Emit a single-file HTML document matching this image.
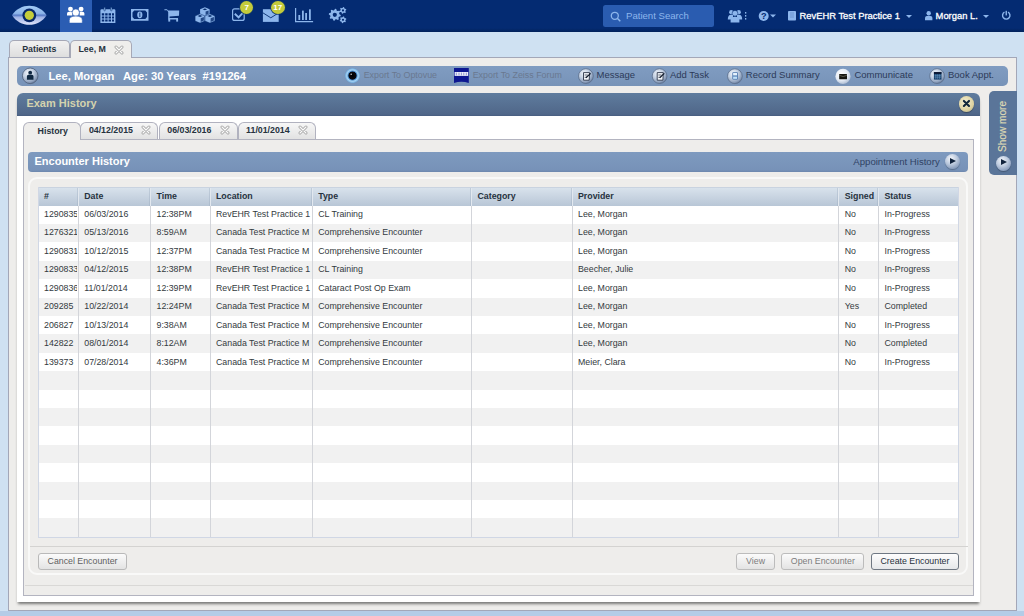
<!DOCTYPE html>
<html><head><meta charset="utf-8">
<style>
*{box-sizing:border-box;margin:0;padding:0}
html,body{width:1024px;height:616px;overflow:hidden;background:#cfe1f2;font-family:"Liberation Sans",sans-serif;position:relative}
div{position:absolute}
#nav{left:0;top:0;width:1024px;height:31.5px;background:linear-gradient(#042b72 0,#042b72 88%,#02225a 100%)}
#navact{left:59.5px;top:0;width:32.5px;height:31.5px;background:#2b5db3}
.badge{width:13px;height:13px;border-radius:50%;background:#c4cb3b;color:#fff;font-size:8px;font-weight:bold;text-align:center;line-height:13px;box-shadow:0 0 0 0.8px #123a6a}
#search{left:602.5px;top:5px;width:111.5px;height:22px;background:#2a5cb0;border-radius:2.5px}
#search span{position:absolute;left:23.5px;top:5.3px;font-size:9.6px;color:#8db6ec;white-space:nowrap}
.navt{color:#fff;font-size:9.4px;-webkit-text-stroke:0.3px #fff;white-space:nowrap;top:10.2px}
.caret{width:0;height:0;border-left:3.5px solid transparent;border-right:3.5px solid transparent;border-top:3.6px solid #8db6ec}
.ttab{top:39.8px;height:17.4px;border:1px solid #a6a8b6;border-bottom:none;border-radius:5px 5px 0 0;font-size:8.8px;font-weight:bold;color:#26323e;white-space:nowrap;background:linear-gradient(#f1f1f1,#dedede)}
.ttab.act{background:#efeeec;height:18.2px;z-index:3}
.xic{position:absolute}
#content{left:8px;top:57px;width:1009px;height:553.6px;background:#eeedeb;border:1px solid #a3a7b8}
#footer{left:0;top:610.6px;width:1024px;height:6px;background:#b4cce7}
#pbar{left:17px;top:66.4px;width:991px;height:19.6px;border-radius:5px;background:linear-gradient(#809cc1,#7793b8)}
.pbt{color:#fff;font-size:11.2px;font-weight:bold;white-space:nowrap;top:3.6px}
.atx{font-size:9.5px;color:#2c3a58;white-space:nowrap;top:3px}
.atx.dis{color:#6a7890;font-size:8.9px;top:3.2px}
.aic{width:14px;height:14px;border-radius:50%;top:2.8px;background:radial-gradient(circle at 50% 35%,#f4f6fa,#b8c3d4 60%,#7c8ba4);box-shadow:0 1px 1px rgba(0,0,0,.25)}
#exam{left:17px;top:93px;width:963px;height:508.5px;background:#fff;border-radius:6px 6px 0 0;box-shadow:0 3.5px 3px -1.5px rgba(0,0,0,.5)}
#examh{left:0;top:0;width:963px;height:22.5px;border-radius:6px 6px 0 0;background:linear-gradient(#5f7c9e,#506789 92%,#485d80)}
#examh span{position:absolute;left:9.4px;top:4.2px;font-size:11px;font-weight:bold;color:#d4d3ae;white-space:nowrap}
#closeb{left:941.9px;top:3.1px;width:15.6px;height:15.6px;border-radius:50%;background:radial-gradient(circle at 42% 38%,#f4f0d6,#ddd2a0 60%,#b8b08a 88%,#8c8a80);box-shadow:0 1px 1px rgba(0,0,0,.3)}
#showm{left:989px;top:91px;width:28px;height:84px;background:#5a7599;border-radius:5px 0 0 5px}
#showm span{position:absolute;left:7.6px;top:61px;transform-origin:0 0;transform:rotate(-90deg);font-size:10.1px;-webkit-text-stroke:0.2px #ddd9b4;color:#ddd9b4;white-space:nowrap}
.itab{top:122px;height:16.8px;border:1px solid #b1b2bf;border-bottom:none;border-radius:6px 6px 0 0;font-size:8.8px;font-weight:bold;color:#26323e;white-space:nowrap;background:linear-gradient(#f7f7f7,#e2e2e2)}
.itab.on{background:#efeeec;height:17.5px;z-index:3}
#tpanel{left:23px;top:138.5px;width:951px;height:457px;background:#eeedeb;border:1px solid #b3b4c0}
#ebar{left:28.3px;top:152px;width:940px;height:19.5px;border-radius:4px;background:linear-gradient(#7e9abf,#7792b8 90%,#6d87ad)}
#ebar span{position:absolute;left:6.2px;top:3px;font-size:11px;font-weight:bold;color:#fff;white-space:nowrap}
#ebar b{position:absolute;right:28.6px;top:3.9px;font-size:9.6px;font-weight:normal;color:#304264;white-space:nowrap}
.playb{width:15px;height:15px;border-radius:50%;background:radial-gradient(circle at 40% 30%,#f2f5fa,#c0cde0 40%,#8a9ebd 75%,#5a6d8e);box-shadow:0 1px 1px rgba(0,0,0,.25)}
.playb:after{content:"";position:absolute;left:5.4px;top:3.9px;border-left:6px solid #10223c;border-top:3.6px solid transparent;border-bottom:3.6px solid transparent}
#grid{left:28.3px;top:177.3px;width:940.2px;height:397.9px;border-radius:9px;border:2px solid #f9f9f8;background:#eeedeb}
#tbl{left:38px;top:186.5px;width:920.5px;height:351.2px;border:1px solid #d0d7e5;border-top:none;background:#fff;overflow:hidden}
#thead{left:0;top:0;width:920.5px;height:19.2px;background:linear-gradient(#d8e2ec,#b8c6d6);border-top:1px solid #c9d3e0}
.hc{top:0;height:19px;line-height:16.4px;padding-left:6px;font-size:8.8px;font-weight:bold;color:#26323e;white-space:nowrap}
.hvl{top:0;width:1px;height:19.2px;background:#e2e8ef;box-shadow:-1px 0 0 rgba(150,165,185,.35)}
#tbody{left:0;top:19.2px;width:920.5px;height:332px}
.r{left:0;width:920.5px;height:18.4px}
.vl{top:0;width:1px;height:332px;background:#d3d5da}
.c{height:18.4px;line-height:16.6px;padding-left:6px;font-size:8.8px;color:#333a40;white-space:nowrap;overflow:hidden}
#sep{left:29.5px;top:546.3px;width:938px;height:1px;background:#d4d3d1}
.btn{top:553px;height:17px;border:1px solid #b9b9b9;border-radius:3px;background:linear-gradient(#fbfbfb,#e3e3e3);font-size:8.8px;color:#606060;text-align:center;line-height:15px;white-space:nowrap}
.btn.pri{border-color:#6f7883;color:#27313c;background:linear-gradient(#fdfdfd,#e6e8ea)}
.btn.dis{color:#7c7c7c;border-color:#bcbcbc}
#line585{left:24.5px;top:585.2px;width:948.5px;height:1px;background:#d9d8d6}
</style></head>
<body>
<div id="nav"></div>
<div id="navact"></div>
<svg style="position:absolute;left:0;top:0" width="1024" height="32" viewBox="0 0 1024 32">
 <defs>
  <linearGradient id="eyeg" x1="0" y1="0" x2="0" y2="1"><stop offset="0" stop-color="#a4cdf6"/><stop offset="0.4" stop-color="#8cb4ea"/><stop offset="0.5" stop-color="#5a7cc8"/><stop offset="0.6" stop-color="#9fb2e6"/><stop offset="1" stop-color="#dfe4fa"/></linearGradient>
 </defs>
 <path d="M12,15.3 C20,2.6 38.6,2.6 46.6,15.3 C38.6,28 20,28 12,15.3Z" fill="url(#eyeg)"/>
 <circle cx="29.3" cy="15.3" r="6.9" fill="#08286a"/>
 <circle cx="29.3" cy="15.3" r="4.65" fill="#c4cc3c"/>
 <g fill="#fff">
  <circle cx="70.45" cy="9.1" r="2.45"/><circle cx="81.1" cy="9.1" r="2.45"/>
  <path d="M67,15.6 L67,13.6 Q67,11.7 69,11.7 L72.3,11.7 L72.3,15.6Z"/>
  <path d="M79.6,11.7 L82.6,11.7 Q84.4,11.7 84.4,13.6 L84.4,15.6 L79.6,15.6Z"/>
  <circle cx="75.8" cy="12.6" r="3.6" stroke="#2b5db3" stroke-width="0.6"/>
  <path d="M69.3,23.1 L69.3,20.3 Q69.3,16.1 75.8,16.1 Q82.3,16.1 82.3,20.3 L82.3,23.1Z" stroke="#2b5db3" stroke-width="0.6"/>
 </g>
 <g fill="#8db6ec">
  <!-- calendar -->
  <path fill-rule="evenodd" d="M100.4,10.4 Q100.4,9.2 101.6,9.2 L114.2,9.2 Q115.4,9.2 115.4,10.4 L115.4,22.9 L100.4,22.9Z M101.8,13.2 L101.8,15.4 L104.2,15.4 L104.2,13.2Z M105.2,13.2 L105.2,15.4 L107.6,15.4 L107.6,13.2Z M108.6,13.2 L108.6,15.4 L111,15.4 L111,13.2Z M112,13.2 L112,15.4 L114,15.4 L114,13.2Z M101.8,16.4 L101.8,18.6 L104.2,18.6 L104.2,16.4Z M105.2,16.4 L105.2,18.6 L107.6,18.6 L107.6,16.4Z M108.6,16.4 L108.6,18.6 L111,18.6 L111,16.4Z M112,16.4 L112,18.6 L114,18.6 L114,16.4Z M101.8,19.6 L101.8,21.6 L104.2,21.6 L104.2,19.6Z M105.2,19.6 L105.2,21.6 L107.6,21.6 L107.6,19.6Z M108.6,19.6 L108.6,21.6 L111,21.6 L111,19.6Z M112,19.6 L112,21.6 L114,21.6 L114,19.6Z"/>
  <rect x="103.9" y="7.3" width="1.4" height="3.6" rx="0.7" stroke="#062c6d" stroke-width="0.5"/>
  <rect x="110.6" y="7.3" width="1.4" height="3.6" rx="0.7" stroke="#062c6d" stroke-width="0.5"/>
  <!-- money -->
  <path fill-rule="evenodd" d="M131,8.9 L148.5,8.9 L148.5,20.7 L131,20.7Z M134.2,10.6 L145.3,10.6 L147,12.6 L147,17 L145.3,19 L134.2,19 L132.5,17 L132.5,12.6Z"/>
  <ellipse cx="139.8" cy="14.8" rx="2.6" ry="3.4"/>
  <path d="M139.4,12.8 L140.3,12.6 L140.3,17 L139.4,17Z" fill="#062c6d"/>
  <!-- cart -->
  <path d="M164.4,9.2 L166.8,9.2 L168.2,10.6 L179.2,10.6 L179,15.8 L169.6,16.6 L169.6,18 L178,18 L178,19.4 L168.2,19.4 L168.2,12 L167,10.3 L164.4,10.3Z"/>
  <rect x="168.3" y="18.6" width="1.9" height="3" /><rect x="176.2" y="18.6" width="1.9" height="3"/>
  <!-- boxes -->
  <path d="M204.9,7.3 L209.6,9.3 L209.6,14.4 L204.9,16.4 L200.1,14.4 L200.1,9.3Z"/>
  <path d="M200,13.8 L204.9,15.9 L204.9,21.1 L200,23.1 L195.1,21.1 L195.1,15.9Z" stroke="#062c6d" stroke-width="0.5"/>
  <path d="M209.9,13.8 L214.9,15.9 L214.9,21.1 L209.9,23.1 L204.9,21.1 L204.9,15.9Z" stroke="#062c6d" stroke-width="0.5"/>
  <path d="M202.6,9.3 L204.9,8.4 L207.2,9.3 L204.9,10.2Z M197.6,16 L200,15.1 L202.4,16 L200,16.9Z M207.5,16 L209.9,15.1 L212.3,16 L209.9,16.9Z" fill="#062c6d"/>
  <path d="M205.6,11.6 L208.6,10.4 L208.6,13.8 L205.6,15Z M200.7,18.3 L203.9,17 L203.9,20.6 L200.7,21.9Z M210.6,18.3 L213.9,17 L213.9,20.6 L210.6,21.9Z" fill="#062c6d" opacity="0.8"/>
  <!-- checkbox -->
  <rect x="232.6" y="8.8" width="11.6" height="11.6" rx="2" fill="none" stroke="#8db6ec" stroke-width="1.2"/>
  <path d="M234.8,13.8 L238.6,17.4 L244.4,11.2" fill="none" stroke="#8db6ec" stroke-width="1.9"/>
  <!-- mail -->
  <path d="M262.9,9.2 L278.7,9.2 L278.7,21.9 L262.9,21.9Z"/>
  <path d="M262.9,12.8 L270.8,17.8 L278.7,12.8" fill="none" stroke="#062c6d" stroke-width="0.9"/>
  <!-- chart -->
  <path d="M295,8.1 L296.2,8.1 L296.2,21 L313.1,21 L313.1,22.2 L295,22.2Z"/>
  <rect x="298.4" y="15" width="1.8" height="5"/><rect x="302" y="10.6" width="1.8" height="9.4"/><rect x="305.2" y="13" width="1.8" height="7"/><rect x="309" y="9.3" width="1.8" height="10.7"/>
  <!-- gears -->
  <path fill-rule="evenodd" d="M335.09,8.81 L336.26,8.98 L336.77,10.64 L337.54,11.11 L339.25,10.77 L339.95,11.72 L339.13,13.25 L339.35,14.13 L340.79,15.09 L340.62,16.26 L338.96,16.77 L338.49,17.54 L338.83,19.25 L337.88,19.95 L336.35,19.13 L335.47,19.35 L334.51,20.79 L333.34,20.62 L332.83,18.96 L332.06,18.49 L330.35,18.83 L329.65,17.88 L330.47,16.35 L330.25,15.47 L328.81,14.51 L328.98,13.34 L330.64,12.83 L331.11,12.06 L330.77,10.35 L331.72,9.65 L333.25,10.47 L334.13,10.25Z M336.90,14.80 A2.1,2.1 0 1 0 332.70,14.80 A2.1,2.1 0 1 0 336.90,14.80Z M343.22,7.01 L344.09,7.18 L344.39,8.32 L344.88,8.75 L346.05,8.90 L346.33,9.74 L345.49,10.56 L345.37,11.20 L345.83,12.29 L345.24,12.96 L344.11,12.64 L343.49,12.85 L342.78,13.79 L341.91,13.62 L341.61,12.48 L341.12,12.05 L339.95,11.90 L339.67,11.06 L340.51,10.24 L340.63,9.60 L340.17,8.51 L340.76,7.84 L341.89,8.16 L342.51,7.95Z M344.10,10.40 A1.1,1.1 0 1 0 341.90,10.40 A1.1,1.1 0 1 0 344.10,10.40Z M343.22,16.41 L344.09,16.58 L344.39,17.72 L344.88,18.15 L346.05,18.30 L346.33,19.14 L345.49,19.96 L345.37,20.60 L345.83,21.69 L345.24,22.36 L344.11,22.04 L343.49,22.25 L342.78,23.19 L341.91,23.02 L341.61,21.88 L341.12,21.45 L339.95,21.30 L339.67,20.46 L340.51,19.64 L340.63,19.00 L340.17,17.91 L340.76,17.24 L341.89,17.56 L342.51,17.35Z M344.10,19.80 A1.1,1.1 0 1 0 341.90,19.80 A1.1,1.1 0 1 0 344.10,19.80Z"/>
 </g>
</svg>
<div class="badge" style="left:240.3px;top:1.2px">7</div>
<div class="badge" style="left:270.8px;top:1.2px;width:14px">17</div>
<div id="search"><svg style="position:absolute;left:7px;top:5.5px" width="12" height="12" viewBox="0 0 12 12"><circle cx="4.8" cy="4.8" r="3.5" fill="none" stroke="#8db6ec" stroke-width="1.3"/><path d="M7.3,7.3 L10.3,10.3" stroke="#8db6ec" stroke-width="1.5"/></svg><span>Patient Search</span></div>
<svg style="position:absolute;left:720px;top:0" width="300" height="32" viewBox="720 0 300 32">
 <g fill="#8db6ec">
  <circle cx="731.2" cy="12.2" r="2.1"/><circle cx="738.8" cy="12.2" r="2.1"/><circle cx="735" cy="13.3" r="2.9" stroke="#042b72" stroke-width="0.6"/>
  <path d="M727.8,19.5 Q727.8,14.8 731,14.8 L733,14.8 L733,19.5Z M742.2,19.5 Q742.2,14.8 739,14.8 L737,14.8 L737,19.5Z"/>
  <path d="M730.6,22.6 L730.6,20 Q730.6,16.7 735,16.7 Q739.4,16.7 739.4,20 L739.4,22.6Z"/>
  <rect x="745" y="12" width="1.3" height="1.6"/><rect x="745" y="15" width="1.3" height="1.6"/><rect x="745" y="18" width="1.3" height="1.6"/>
  <circle cx="763.7" cy="16" r="5"/>
  <path d="M770,14.5 L776,14.5 L773,17.6Z"/>
  <rect x="788" y="11" width="8" height="9.6" rx="0.8"/>
 </g>
 <text x="763.7" y="19.4" font-size="9.2" font-weight="bold" text-anchor="middle" fill="#042b72" font-family="Liberation Sans">?</text>
 <path d="M790,13 L794,13 M790,15 L794,15 M790,17 L794,17" stroke="#5f88c4" stroke-width="0.7"/>
 <g fill="#8db6ec">
  <circle cx="928.7" cy="13.2" r="2.2"/>
  <path d="M925,20.2 L925,18.2 Q925,15.8 928.7,15.8 Q932.4,15.8 932.4,18.2 L932.4,20.2Z"/>
  <path d="M1004.5,12.2 A3.7,3.7 0 1 0 1008,12.2" fill="none" stroke="#8db6ec" stroke-width="1.4"/>
  <rect x="1005.55" y="10.8" width="1.4" height="4.6"/>
 </g>
</svg>
<div class="navt" style="left:799.5px">RevEHR Test Practice 1</div>
<div class="caret" style="left:905.6px;top:14.6px"></div>
<div class="navt" style="left:935.6px">Morgan L.</div>
<div class="caret" style="left:983.2px;top:14.6px"></div>

<!-- top tabs -->
<div class="ttab" style="left:8.6px;width:61px"><span style="position:absolute;left:12.6px;top:2.8px">Patients</span></div>
<div class="ttab act" style="left:69.5px;width:62px"><span style="position:absolute;left:8px;top:3.5px">Lee, M</span><svg style="position:absolute;left:43.50px;top:4.30px" width="10" height="10" viewBox="0 0 10 10"><path d="M2,2 L8,8 M8,2 L2,8" stroke="#a0a0a0" stroke-width="2.9" stroke-linecap="round"/><path d="M2,2 L8,8 M8,2 L2,8" stroke="#fcfcfc" stroke-width="1.3" stroke-linecap="round"/></svg></div>
<div id="content"></div><div id="footer"></div>
<div id="pbar">
 <div class="pbt" style="left:31.4px">Lee, Morgan</div>
 <div class="pbt" style="left:106px">Age: 30 Years</div>
 <div class="pbt" style="left:185.5px">#191264</div>
 <div class="atx dis" style="left:346.7px">Export To Optovue</div>
 <div class="atx dis" style="left:455.7px">Export To Zeiss Forum</div>
 <div class="atx" style="left:579.5px">Message</div>
 <div class="atx" style="left:653px">Add Task</div>
 <div class="atx" style="left:728.8px">Record Summary</div>
 <div class="atx" style="left:837.4px">Communicate</div>
 <div class="atx" style="left:931px">Book Appt.</div>
</div>
<svg style="position:absolute;left:0;top:60px" width="1024" height="32" viewBox="0 60 1024 32">
 <defs>
  <radialGradient id="gl" cx="0.38" cy="0.32" r="0.75"><stop offset="0" stop-color="#f2f6fc"/><stop offset="0.45" stop-color="#c3d0e2"/><stop offset="0.8" stop-color="#8a9dba"/><stop offset="1" stop-color="#56698a"/></radialGradient>
  <radialGradient id="glw" cx="0.4" cy="0.35" r="0.75"><stop offset="0" stop-color="#ffffff"/><stop offset="0.55" stop-color="#e4ebf5"/><stop offset="0.85" stop-color="#b6c4d8"/><stop offset="1" stop-color="#8797b2"/></radialGradient>
  <radialGradient id="opt" cx="0.5" cy="0.5" r="0.5"><stop offset="0" stop-color="#000"/><stop offset="0.48" stop-color="#0a0a10"/><stop offset="0.56" stop-color="#3f80c0"/><stop offset="0.72" stop-color="#a9d6f6"/><stop offset="0.9" stop-color="#7fb4e0"/><stop offset="1" stop-color="#6c95c4"/></radialGradient>
 </defs>
 <!-- avatar -->
 <circle cx="30.2" cy="75.8" r="7.8" fill="url(#gl)" stroke="#52647f" stroke-width="0.9"/>
 <circle cx="30.2" cy="72.7" r="1.9" fill="#0f2842"/>
 <path d="M26.9,79.8 L26.9,76.4 Q26.9,74.8 28.4,74.8 L32,74.8 Q33.5,74.8 33.5,76.4 L33.5,79.8Z" fill="#0f2842"/>
 <!-- optovue -->
 <circle cx="352.5" cy="75.6" r="7.7" fill="url(#opt)"/>
 <circle cx="351.2" cy="74.3" r="0.8" fill="#c8c8c8"/>
 <!-- zeiss -->
 <path d="M454,68.1 L468.8,68.1 L468.8,82.9 Q461.4,80.6 454,82.9Z" fill="#0d1791"/>
 <rect x="454.6" y="72" width="13.6" height="3.9" fill="#eef0fa"/>
 <path d="M456.3,72.6 L456.3,75.3 M459,72.6 L459,75.3 M461.4,72.6 L461.4,75.3 M463.8,72.6 L463.8,75.3 M466.3,72.6 L466.3,75.3" stroke="#4a55b0" stroke-width="0.6"/>
 <!-- message -->
 <circle cx="585.9" cy="76.1" r="7.4" fill="url(#gl)" stroke="#5c6e8c" stroke-width="0.8"/>
 <path d="M583.5,72.6 L589.6,72.6 L589.2,80.2 L583.5,80.2Z" fill="#f4f7fb" stroke="#2a3448" stroke-width="0.9"/>
 <path d="M584.6,75 L587.8,75 M584.6,77.3 L586.6,77.3" stroke="#2a3448" stroke-width="0.7"/>
 <path d="M586,77.8 L590.6,73.4" stroke="#111a2a" stroke-width="1.3"/>
 <!-- add task -->
 <circle cx="659.6" cy="76.1" r="7.4" fill="url(#gl)" stroke="#5c6e8c" stroke-width="0.8"/>
 <path d="M657.2,72.6 L663.3,72.6 L662.9,80.2 L657.2,80.2Z" fill="#f4f7fb" stroke="#2a3448" stroke-width="0.9"/>
 <path d="M658.3,75 L661.5,75 M658.3,77.3 L660.3,77.3" stroke="#2a3448" stroke-width="0.7"/>
 <path d="M659.7,77.8 L664.3,73.4" stroke="#111a2a" stroke-width="1.3"/>
 <!-- record -->
 <circle cx="734.9" cy="76.2" r="7.4" fill="url(#gl)" stroke="#5c6e8c" stroke-width="0.8"/>
 <rect x="732.4" y="72.3" width="5.4" height="7.2" rx="0.8" fill="#3a6aa8"/>
 <rect x="733.1" y="72.9" width="4" height="2.6" fill="#e6f2fc"/>
 <rect x="733.1" y="76.5" width="4" height="2.4" fill="#bfe0f8"/>
 <!-- communicate -->
 <circle cx="843" cy="76.4" r="7.6" fill="url(#glw)"/>
 <rect x="839.2" y="74" width="7.8" height="5.2" rx="0.5" fill="#15150f"/>
 <path d="M839.4,75.4 Q843.1,77.6 846.8,75.4" fill="none" stroke="#8a8a7a" stroke-width="0.6"/>
 <!-- book -->
 <circle cx="937.1" cy="76.1" r="7.4" fill="url(#gl)" stroke="#5c6e8c" stroke-width="0.8"/>
 <rect x="933.9" y="72.2" width="7.6" height="7.4" fill="#153e6a"/>
 <rect x="933.9" y="72.2" width="7.6" height="1.5" fill="#050c24"/>
 <path d="M934.5,75.3 L941,75.3 M934.5,77.1 L941,77.1 M935.8,74.2 L935.8,79 M937.7,74.2 L937.7,79 M939.6,74.2 L939.6,79" stroke="#7fb0dc" stroke-width="0.45"/>
</svg>

<div id="exam">
 <div id="examh"><span>Exam History</span><div id="closeb"><svg style="position:absolute;left:3.3px;top:2.8px" width="9" height="9" viewBox="0 0 9 9"><path d="M1.9,1.9 L7,7 M7,1.9 L1.9,7" stroke="#10263a" stroke-width="2.1" stroke-linecap="round"/></svg></div></div>
</div>
<div id="showm"><span>Show more</span><div class="playb" style="left:6.8px;top:64.6px"></div></div>

<div id="tpanel"></div>
<div class="itab on" style="left:23px;width:57.5px"><span style="position:absolute;left:13.6px;top:3px">History</span></div>
<div class="itab" style="left:80.4px;width:77.8px"><span style="position:absolute;left:7.5px;top:2.4px">04/12/2015</span><svg style="position:absolute;left:59.90px;top:2.40px" width="10" height="10" viewBox="0 0 10 10"><path d="M2,2 L8,8 M8,2 L2,8" stroke="#a0a0a0" stroke-width="2.9" stroke-linecap="round"/><path d="M2,2 L8,8 M8,2 L2,8" stroke="#fcfcfc" stroke-width="1.3" stroke-linecap="round"/></svg></div>
<div class="itab" style="left:158.8px;width:78.8px"><span style="position:absolute;left:7.5px;top:2.4px">06/03/2016</span><svg style="position:absolute;left:60.20px;top:2.40px" width="10" height="10" viewBox="0 0 10 10"><path d="M2,2 L8,8 M8,2 L2,8" stroke="#a0a0a0" stroke-width="2.9" stroke-linecap="round"/><path d="M2,2 L8,8 M8,2 L2,8" stroke="#fcfcfc" stroke-width="1.3" stroke-linecap="round"/></svg></div>
<div class="itab" style="left:237.6px;width:78.4px"><span style="position:absolute;left:7.5px;top:2.4px">11/01/2014</span><svg style="position:absolute;left:59.60px;top:2.40px" width="10" height="10" viewBox="0 0 10 10"><path d="M2,2 L8,8 M8,2 L2,8" stroke="#a0a0a0" stroke-width="2.9" stroke-linecap="round"/><path d="M2,2 L8,8 M8,2 L2,8" stroke="#fcfcfc" stroke-width="1.3" stroke-linecap="round"/></svg></div>
<div id="ebar"><span>Encounter History</span><b>Appointment History</b><div class="playb" style="left:916.5px;top:2.3px"></div></div>
<div id="grid"></div>
<div id="tbl">
 <div id="thead"><div class="hc" style="left:-1.00px;width:40.25px">#</div>
<div class="hc" style="left:39.25px;width:72.25px">Date</div>
<div class="hc" style="left:111.50px;width:59.50px">Time</div>
<div class="hc" style="left:171.00px;width:102.25px">Location</div>
<div class="hc" style="left:273.25px;width:159.25px">Type</div>
<div class="hc" style="left:432.50px;width:100.50px">Category</div>
<div class="hc" style="left:533.00px;width:266.75px">Provider</div>
<div class="hc" style="left:799.75px;width:39.75px">Signed</div>
<div class="hc" style="left:839.50px;width:80.00px">Status</div>
<div class="hvl" style="left:38.75px"></div>
<div class="hvl" style="left:111.00px"></div>
<div class="hvl" style="left:170.50px"></div>
<div class="hvl" style="left:272.75px"></div>
<div class="hvl" style="left:432.00px"></div>
<div class="hvl" style="left:532.50px"></div>
<div class="hvl" style="left:799.25px"></div>
<div class="hvl" style="left:839.00px"></div></div>
 <div id="tbody"><div class="r" style="top:0.00px;background:#ffffff"></div>
<div class="r" style="top:18.40px;background:#f1f1f1"></div>
<div class="r" style="top:36.80px;background:#ffffff"></div>
<div class="r" style="top:55.20px;background:#f1f1f1"></div>
<div class="r" style="top:73.60px;background:#ffffff"></div>
<div class="r" style="top:92.00px;background:#f1f1f1"></div>
<div class="r" style="top:110.40px;background:#ffffff"></div>
<div class="r" style="top:128.80px;background:#f1f1f1"></div>
<div class="r" style="top:147.20px;background:#ffffff"></div>
<div class="r" style="top:165.60px;background:#f1f1f1"></div>
<div class="r" style="top:184.00px;background:#ffffff"></div>
<div class="r" style="top:202.40px;background:#f1f1f1"></div>
<div class="r" style="top:220.80px;background:#ffffff"></div>
<div class="r" style="top:239.20px;background:#f1f1f1"></div>
<div class="r" style="top:257.60px;background:#ffffff"></div>
<div class="r" style="top:276.00px;background:#f1f1f1"></div>
<div class="r" style="top:294.40px;background:#ffffff"></div>
<div class="r" style="top:312.80px;background:#f1f1f1"></div>
<div class="vl" style="left:38.75px"></div>
<div class="vl" style="left:111.00px"></div>
<div class="vl" style="left:170.50px"></div>
<div class="vl" style="left:272.75px"></div>
<div class="vl" style="left:432.00px"></div>
<div class="vl" style="left:532.50px"></div>
<div class="vl" style="left:799.25px"></div>
<div class="vl" style="left:839.00px"></div>
<div class="c" style="top:0.00px;left:-1.00px;width:38.95px">1290835</div>
<div class="c" style="top:0.00px;left:39.25px;width:70.95px">06/03/2016</div>
<div class="c" style="top:0.00px;left:111.50px;width:58.20px">12:38PM</div>
<div class="c" style="top:0.00px;left:171.00px;width:100.95px">RevEHR Test Practice 1</div>
<div class="c" style="top:0.00px;left:273.25px;width:157.95px">CL Training</div>
<div class="c" style="top:0.00px;left:533.00px;width:265.45px">Lee, Morgan</div>
<div class="c" style="top:0.00px;left:799.75px;width:38.45px">No</div>
<div class="c" style="top:0.00px;left:839.50px;width:78.70px">In-Progress</div>
<div class="c" style="top:18.50px;left:-1.00px;width:38.95px">1276321</div>
<div class="c" style="top:18.50px;left:39.25px;width:70.95px">05/13/2016</div>
<div class="c" style="top:18.50px;left:111.50px;width:58.20px">8:59AM</div>
<div class="c" style="top:18.50px;left:171.00px;width:100.95px">Canada Test Practice M</div>
<div class="c" style="top:18.50px;left:273.25px;width:157.95px">Comprehensive Encounter</div>
<div class="c" style="top:18.50px;left:533.00px;width:265.45px">Lee, Morgan</div>
<div class="c" style="top:18.50px;left:799.75px;width:38.45px">No</div>
<div class="c" style="top:18.50px;left:839.50px;width:78.70px">In-Progress</div>
<div class="c" style="top:37.00px;left:-1.00px;width:38.95px">1290831</div>
<div class="c" style="top:37.00px;left:39.25px;width:70.95px">10/12/2015</div>
<div class="c" style="top:37.00px;left:111.50px;width:58.20px">12:37PM</div>
<div class="c" style="top:37.00px;left:171.00px;width:100.95px">Canada Test Practice M</div>
<div class="c" style="top:37.00px;left:273.25px;width:157.95px">Comprehensive Encounter</div>
<div class="c" style="top:37.00px;left:533.00px;width:265.45px">Lee, Morgan</div>
<div class="c" style="top:37.00px;left:799.75px;width:38.45px">No</div>
<div class="c" style="top:37.00px;left:839.50px;width:78.70px">In-Progress</div>
<div class="c" style="top:55.50px;left:-1.00px;width:38.95px">1290833</div>
<div class="c" style="top:55.50px;left:39.25px;width:70.95px">04/12/2015</div>
<div class="c" style="top:55.50px;left:111.50px;width:58.20px">12:38PM</div>
<div class="c" style="top:55.50px;left:171.00px;width:100.95px">RevEHR Test Practice 1</div>
<div class="c" style="top:55.50px;left:273.25px;width:157.95px">CL Training</div>
<div class="c" style="top:55.50px;left:533.00px;width:265.45px">Beecher, Julie</div>
<div class="c" style="top:55.50px;left:799.75px;width:38.45px">No</div>
<div class="c" style="top:55.50px;left:839.50px;width:78.70px">In-Progress</div>
<div class="c" style="top:74.00px;left:-1.00px;width:38.95px">1290836</div>
<div class="c" style="top:74.00px;left:39.25px;width:70.95px">11/01/2014</div>
<div class="c" style="top:74.00px;left:111.50px;width:58.20px">12:39PM</div>
<div class="c" style="top:74.00px;left:171.00px;width:100.95px">RevEHR Test Practice 1</div>
<div class="c" style="top:74.00px;left:273.25px;width:157.95px">Cataract Post Op Exam</div>
<div class="c" style="top:74.00px;left:533.00px;width:265.45px">Lee, Morgan</div>
<div class="c" style="top:74.00px;left:799.75px;width:38.45px">No</div>
<div class="c" style="top:74.00px;left:839.50px;width:78.70px">In-Progress</div>
<div class="c" style="top:92.50px;left:-1.00px;width:38.95px">209285</div>
<div class="c" style="top:92.50px;left:39.25px;width:70.95px">10/22/2014</div>
<div class="c" style="top:92.50px;left:111.50px;width:58.20px">12:24PM</div>
<div class="c" style="top:92.50px;left:171.00px;width:100.95px">Canada Test Practice M</div>
<div class="c" style="top:92.50px;left:273.25px;width:157.95px">Comprehensive Encounter</div>
<div class="c" style="top:92.50px;left:533.00px;width:265.45px">Lee, Morgan</div>
<div class="c" style="top:92.50px;left:799.75px;width:38.45px">Yes</div>
<div class="c" style="top:92.50px;left:839.50px;width:78.70px">Completed</div>
<div class="c" style="top:111.00px;left:-1.00px;width:38.95px">206827</div>
<div class="c" style="top:111.00px;left:39.25px;width:70.95px">10/13/2014</div>
<div class="c" style="top:111.00px;left:111.50px;width:58.20px">9:38AM</div>
<div class="c" style="top:111.00px;left:171.00px;width:100.95px">Canada Test Practice M</div>
<div class="c" style="top:111.00px;left:273.25px;width:157.95px">Comprehensive Encounter</div>
<div class="c" style="top:111.00px;left:533.00px;width:265.45px">Lee, Morgan</div>
<div class="c" style="top:111.00px;left:799.75px;width:38.45px">No</div>
<div class="c" style="top:111.00px;left:839.50px;width:78.70px">In-Progress</div>
<div class="c" style="top:129.50px;left:-1.00px;width:38.95px">142822</div>
<div class="c" style="top:129.50px;left:39.25px;width:70.95px">08/01/2014</div>
<div class="c" style="top:129.50px;left:111.50px;width:58.20px">8:12AM</div>
<div class="c" style="top:129.50px;left:171.00px;width:100.95px">Canada Test Practice M</div>
<div class="c" style="top:129.50px;left:273.25px;width:157.95px">Comprehensive Encounter</div>
<div class="c" style="top:129.50px;left:533.00px;width:265.45px">Lee, Morgan</div>
<div class="c" style="top:129.50px;left:799.75px;width:38.45px">No</div>
<div class="c" style="top:129.50px;left:839.50px;width:78.70px">Completed</div>
<div class="c" style="top:148.00px;left:-1.00px;width:38.95px">139373</div>
<div class="c" style="top:148.00px;left:39.25px;width:70.95px">07/28/2014</div>
<div class="c" style="top:148.00px;left:111.50px;width:58.20px">4:36PM</div>
<div class="c" style="top:148.00px;left:171.00px;width:100.95px">Canada Test Practice M</div>
<div class="c" style="top:148.00px;left:273.25px;width:157.95px">Comprehensive Encounter</div>
<div class="c" style="top:148.00px;left:533.00px;width:265.45px">Meier, Clara</div>
<div class="c" style="top:148.00px;left:799.75px;width:38.45px">No</div>
<div class="c" style="top:148.00px;left:839.50px;width:78.70px">In-Progress</div></div>
</div>
<div id="sep"></div>
<div class="btn" style="left:38px;width:89px">Cancel Encounter</div>
<div class="btn dis" style="left:736.4px;width:38.3px">View</div>
<div class="btn dis" style="left:781.2px;width:83.3px">Open Encounter</div>
<div class="btn pri" style="left:871.2px;width:87.5px">Create Encounter</div>
<div id="line585"></div>
</body></html>
